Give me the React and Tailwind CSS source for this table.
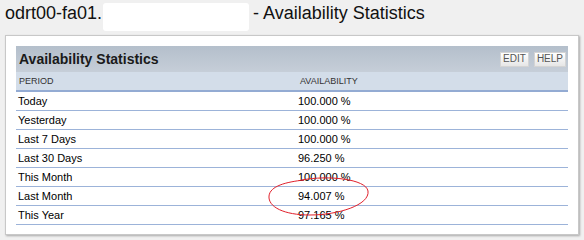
import React from "react";

const rows = [
    { period: "Today", value: "100.000 %" },
    { period: "Yesterday", value: "100.000 %" },
    { period: "Last 7 Days", value: "100.000 %" },
    { period: "Last 30 Days", value: "96.250 %" },
    { period: "This Month", value: "100.000 %" },
    { period: "Last Month", value: "94.007 %" },
    { period: "This Year", value: "97.165 %" },
];

const SmallButton = ({ text }) => (
    <div className="flex h-[15px] items-center border border-[#d4d4d4] bg-gradient-to-b from-white to-[#e6e6e6] px-[2px] text-[10px] leading-none text-[#555]">
        {text}
    </div>
);

const App = () => {
    return (
        <div className="relative h-[240px] w-[584px] overflow-hidden bg-[#f0f0f0] font-['Liberation_Sans',Arial,sans-serif] text-black">
            {/* page heading with the hidden host name */}
            <div className="flex h-[35px] items-start pl-[5px] text-[18px] leading-[21px] text-[#111]">
                <span className="mt-[3px]">odrt00-fa01.</span>
                <span className="mt-[3px] ml-[1px] h-[28px] w-[146px] rounded-[3px] bg-white"></span>
                <span className="mt-[3px] ml-[4px]">- Availability Statistics</span>
            </div>

            {/* panel */}
            <div className="ml-[5px] h-[200px] w-[574px] border border-[#c8c8c8] bg-white p-[10px] shadow-[1px_1px_2px_rgba(0,0,0,0.3)]">
                <div className="flex h-[26px] items-center justify-between bg-gradient-to-b from-[#b4bfcb] to-[#c6ced8] pl-[3px] pr-[2px]">
                    <span className="text-[14px] font-bold text-[#1a1a1a]">Availability Statistics</span>
                    <div className="flex gap-[5px]">
                        <SmallButton text="EDIT" />
                        <SmallButton text="HELP" />
                    </div>
                </div>

                <div className="grid h-[20px] grid-cols-[281px_1fr] items-center border-b-2 border-[#93abd3] bg-[#d3dde9] pl-[3px] pt-[1px] text-[9px] uppercase text-[#333]">
                    <span>Period</span>
                    <span>Availability</span>
                </div>

                {rows.map((row, index) => (
                    <div
                        key={index}
                        className="grid h-[19px] grid-cols-[280px_1fr] items-center border-b border-[#9cb3d9] pl-[2px] text-[11px]"
                    >
                        <span>{row.period}</span>
                        <span>{row.value}</span>
                    </div>
                ))}
            </div>

            {/* hand drawn red circle round last month */}
            <svg
                className="absolute left-[266px] top-[175px]"
                width="106"
                height="44"
                viewBox="0 0 106 44"
            >
                <path
                    d="M36 5 C62 0 100 4 102 16 C104 30 72 40 44 40 C18 40 2 32 3 21 C4 11 20 7 38 5"
                    fill="none"
                    stroke="#e1202b"
                    strokeWidth="1"
                />
            </svg>
        </div>
    );
};

export default App;
